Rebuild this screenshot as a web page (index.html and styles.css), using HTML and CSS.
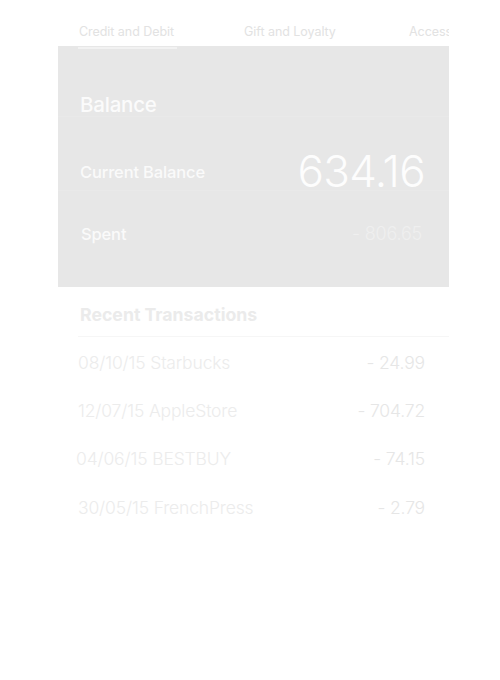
FILE: index.html
```html
<!DOCTYPE html>
<html>
<head>
<meta charset="utf-8">
<link rel="stylesheet" href="styles.css">
</head>
<body>
<div class="screen">
  <nav class="tabs">
    <div class="tab active"><span class="tab-label">Credit and Debit</span></div>
    <div class="tab"><span class="tab-label">Gift and Loyalty</span></div>
    <div class="tab"><span class="tab-label">Accessories</span></div>
  </nav>
  <section class="panel">
    <div class="panel-row title-row">
      <h1 class="panel-title">Balance</h1>
    </div>
    <div class="panel-row current-row">
      <span class="label">Current Balance</span>
      <span class="big-amount">634.16</span>
    </div>
    <div class="panel-row spent-row">
      <span class="label spent-label">Spent</span>
      <span class="spent-amount">- 806.65</span>
    </div>
  </section>
  <section class="recent">
    <h2 class="recent-title">Recent Transactions</h2>
    <ul class="tx-list">
      <li class="tx"><span class="tx-name">08/10/15 Starbucks</span><span class="tx-amount">- 24.99</span></li>
      <li class="tx"><span class="tx-name">12/07/15 AppleStore</span><span class="tx-amount">- 704.72</span></li>
      <li class="tx"><span class="tx-name shift">04/06/15 BESTBUY</span><span class="tx-amount">- 74.15</span></li>
      <li class="tx"><span class="tx-name">30/05/15 FrenchPress</span><span class="tx-amount">- 2.79</span></li>
    </ul>
  </section>
</div>
</body>
</html>
```

FILE: styles.css
```css
* { box-sizing: border-box; }

html, body {
  margin: 0;
  padding: 0;
  background: #ffffff;
}

body {
  font-family: "Inter", "Liberation Sans", sans-serif;
  width: 500px;
  height: 680px;
}

.screen {
  margin-left: 58px;
  width: 391px;
  overflow: hidden;
}

/* Tabs */
.tabs {
  display: flex;
  height: 46px;
  padding-left: 20px;
  white-space: nowrap;
}

.tab {
  flex: none;
  width: 165px;
  padding-top: 20px;
}

.tab-label {
  display: inline-block;
  font-size: 12.5px;
  line-height: 16px;
  color: #e2e2e2;
  padding: 0 3px 7px 1px;
  border-bottom: 2px solid transparent;
  letter-spacing: -0.05px;
}

.tab.active .tab-label {
  border-bottom-color: #f2f2f2;
}

/* Balance panel */
.panel {
  background: #e7e7e7;
  height: 241px;
}

.panel-row {
  display: flex;
  align-items: center;
  justify-content: space-between;
  padding-left: 22px;
  padding-right: 24px;
}

.title-row {
  padding-top: 48px;
  border-bottom: 1px solid #e9e9e9;
}

.panel-title {
  margin: 0;
  font-size: 20.5px;
  line-height: 22px;
  font-weight: 500;
  color: #fbfbfb;
  letter-spacing: -0.2px;
}

.current-row {
  padding-top: 37px;
  height: 74px;
  border-bottom: 1px solid #e9e9e9;
}

.label {
  font-size: 16.5px;
  line-height: 20px;
  font-weight: 500;
  color: #fafafa;
  letter-spacing: -0.15px;
}

.big-amount {
  font-size: 44px;
  line-height: 38px;
  font-weight: 300;
  color: #fdfdfd;
  letter-spacing: -0.7px;
  margin-top: -2px;
}

.spent-row {
  padding-top: 33px;
  padding-right: 27px;
}

.spent-label {
  padding-left: 1px;
}

.spent-amount {
  font-size: 18px;
  line-height: 20px;
  font-weight: 300;
  color: #efefef;
  letter-spacing: -0.2px;
}

/* Recent transactions */
.recent {
  padding-top: 17px;
}

.recent-title {
  margin: 0 0 0 20px;
  padding: 0 0 10px 2px;
  font-size: 17.7px;
  line-height: 22px;
  font-weight: 700;
  color: #ebebeb;
  border-bottom: 1px solid #f6f6f6;
  letter-spacing: 0;
}

.tx-list {
  list-style: none;
  margin: 0;
  padding: 1px 24px 0 20px;
}

.tx {
  display: flex;
  align-items: center;
  justify-content: space-between;
  height: 48.4px;
  font-size: 17.5px;
  font-weight: 300;
  letter-spacing: -0.15px;
}

.tx-name {
  color: #ececec;
}

.tx-name.shift {
  margin-left: -2px;
}

.tx-amount {
  color: #e6e6e6;
}
```
